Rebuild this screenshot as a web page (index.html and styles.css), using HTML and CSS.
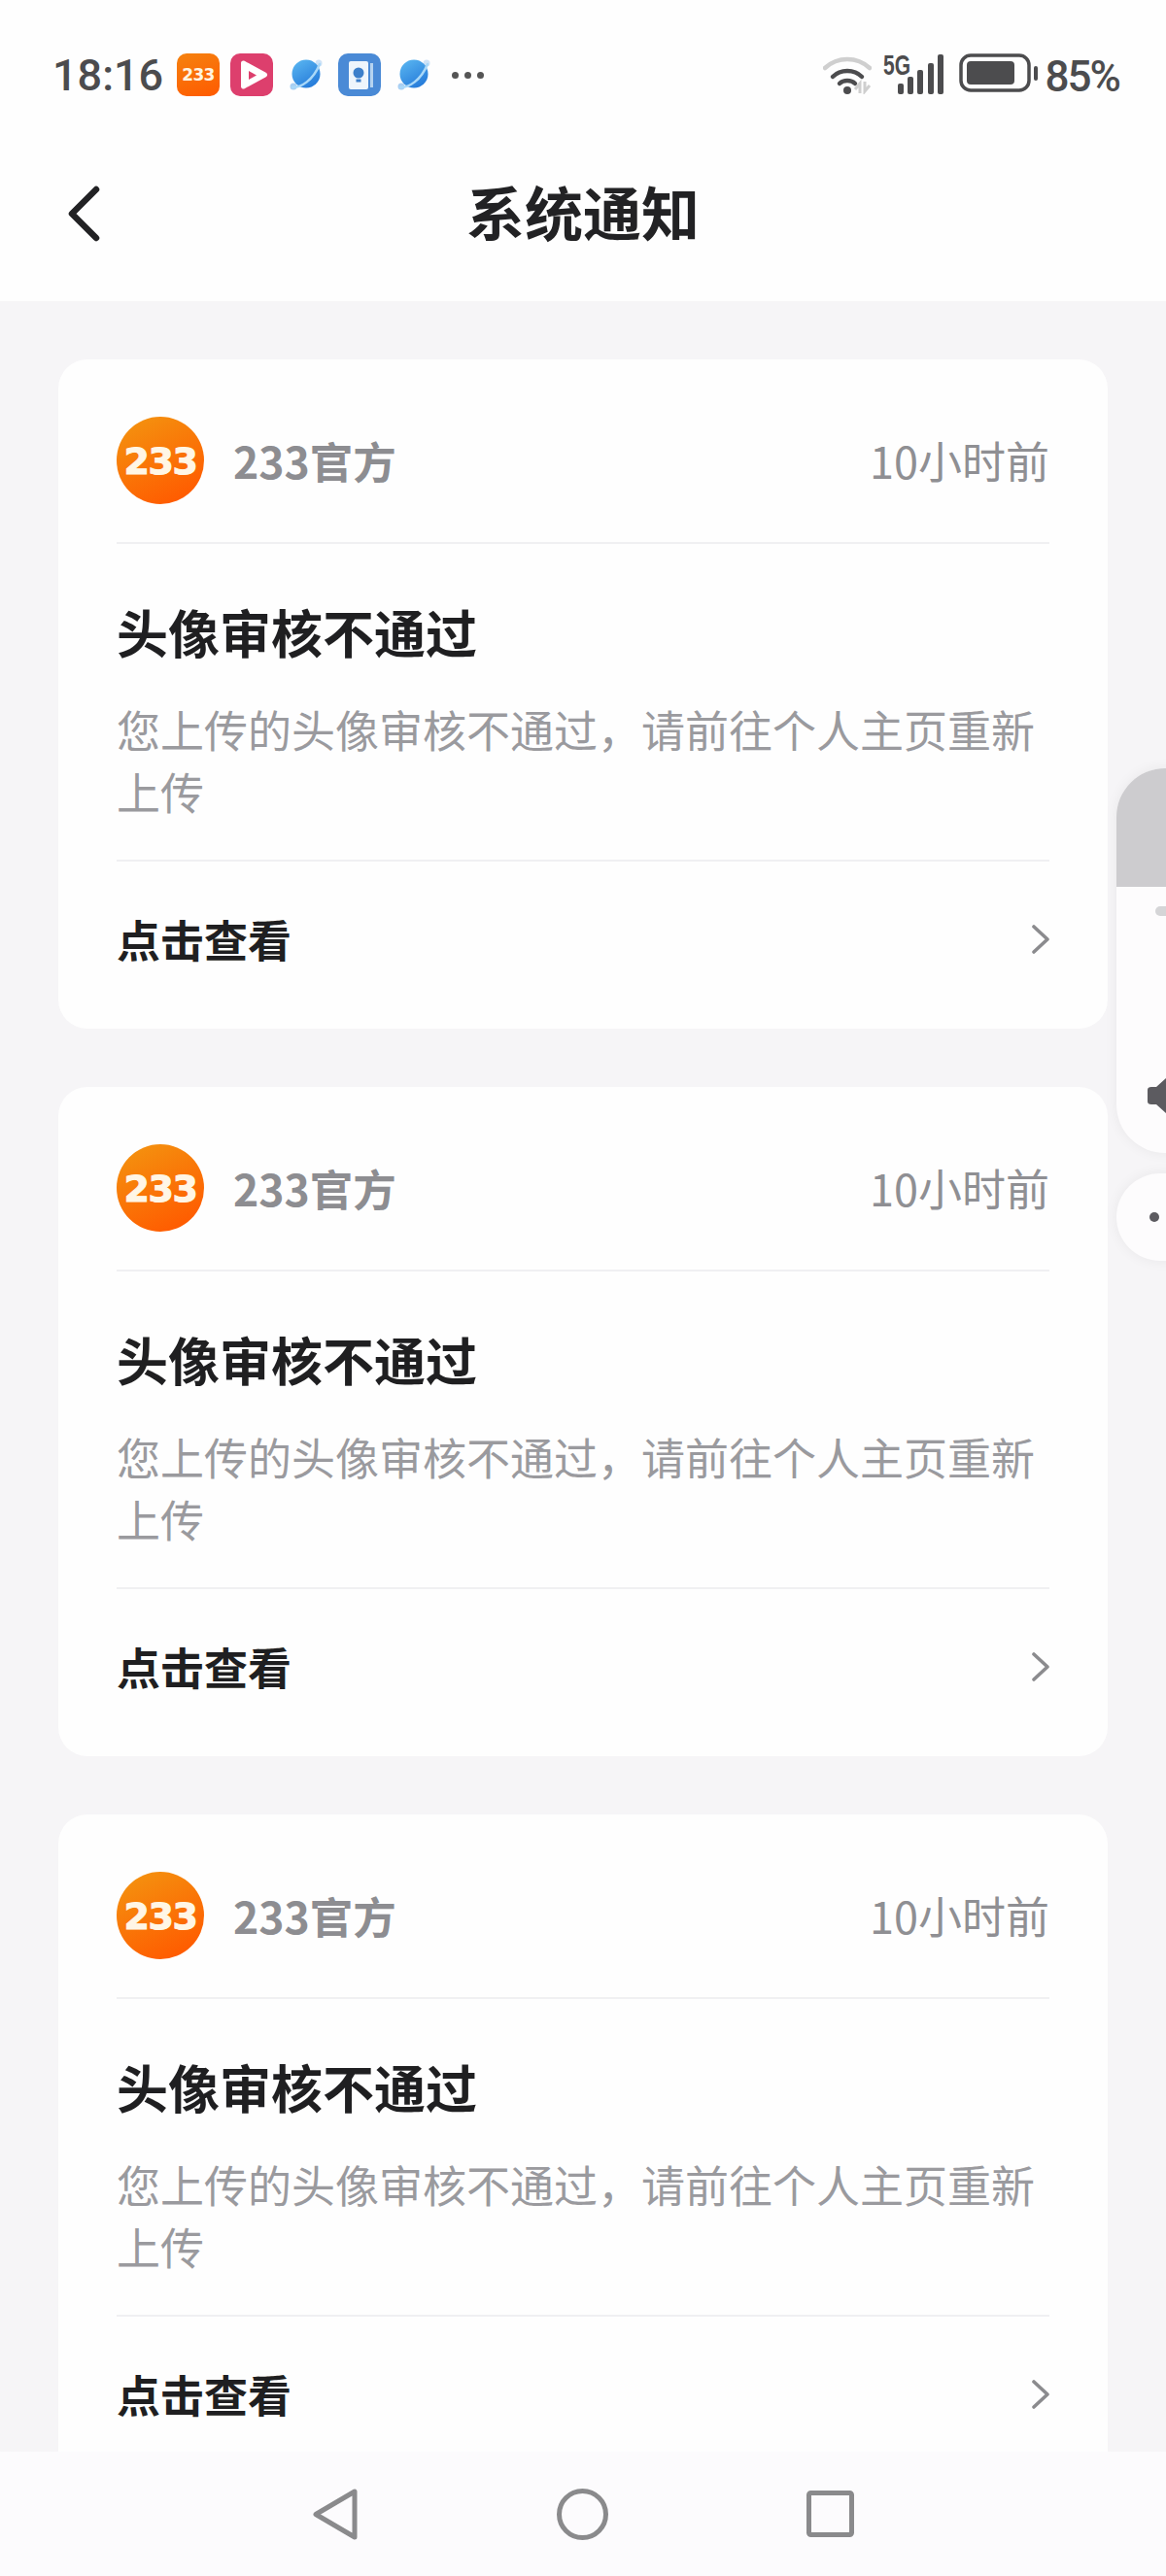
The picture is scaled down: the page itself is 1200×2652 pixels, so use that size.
FILE: index.html
```html
<!DOCTYPE html>
<html lang="zh">
<head>
<meta charset="utf-8">
<title>系统通知</title>
<link rel="stylesheet" href="styles.css">
</head>
<body>
<svg class="defs" width="0" height="0" aria-hidden="true">
  <defs>
    <linearGradient id="orange" x1="0.2" y1="0" x2="0.7" y2="1">
      <stop offset="0" stop-color="#f4920f"/>
      <stop offset="1" stop-color="#ff5a00"/>
    </linearGradient>
    <linearGradient id="planet" x1="0.2" y1="0" x2="0.8" y2="1">
      <stop offset="0" stop-color="#58b4f0"/>
      <stop offset="1" stop-color="#2277d8"/>
    </linearGradient>
    <symbol id="planet-icon" viewBox="0 0 34 32">
      <circle cx="30" cy="4" r="3.500" fill="#cfe3f7"/>
      <circle cx="4" cy="28" r="3.500" fill="#a9cff2"/>
      <circle cx="17" cy="15" r="14.500" fill="url(#planet)"/>
      <path d="M3 29C12 29 24 22 31 5" fill="none" stroke="#a9d8f8" stroke-width="2.500" stroke-linecap="round"/>
    </symbol>
    <symbol id="chev" viewBox="0 0 18 30">
      <path d="M2 2L16 15L2 28" fill="none" stroke="#8b8b8e" stroke-width="3.600" stroke-linecap="round" stroke-linejoin="round"/>
    </symbol>
  </defs>
</svg>
<div class="app">
  <div class="top">
    <div class="status">
      <div class="status-left">
        <span class="time">18:16</span>
        <span class="app-icon app-233">233</span>
        <svg class="app-icon" viewBox="0 0 44 44">
          <rect width="44" height="44" rx="10" fill="#dd3f6d"/>
          <path d="M13.500 10L35.500 22L13.500 34Z" fill="#fff" stroke="#fff" stroke-width="5" stroke-linejoin="round"/>
          <path d="M19 18L27 22.500L19 27Z" fill="#dd3f6d"/>
        </svg>
        <svg class="planet" viewBox="0 0 34 32"><use href="#planet-icon"/></svg>
        <svg class="app-icon" viewBox="0 0 44 44">
          <rect width="44" height="44" rx="10" fill="#4a8ad6"/>
          <rect x="11" y="8" width="20" height="29" rx="2" fill="#eef5fc"/>
          <rect x="33" y="10" width="3" height="25" fill="#b6d3f0"/>
          <circle cx="21" cy="20" r="5.500" fill="#3c7fca"/>
          <rect x="18.500" y="26.500" width="5" height="3" fill="#3c7fca"/>
        </svg>
        <svg class="planet" viewBox="0 0 34 32"><use href="#planet-icon"/></svg>
        <span class="more"><i></i><i></i><i></i></span>
      </div>
      <div class="status-right">
        <svg class="wifi" viewBox="0 0 50 41">
          <path d="M2 14C15 2 35 2 48 14" fill="none" stroke="#cfcfcf" stroke-width="4.500" stroke-linecap="round"/>
          <path d="M10 23C18 15 32 15 40 23" fill="none" stroke="#4c4c4e" stroke-width="4.500" stroke-linecap="round"/>
          <path d="M17 30C21 26 29 26 33 30" fill="none" stroke="#4c4c4e" stroke-width="4.500" stroke-linecap="round"/>
          <circle cx="25" cy="37" r="4" fill="#4c4c4e"/>
          <path d="M38 40V30L33 36M43 28V38L48 32" fill="none" stroke="#cfcfcf" stroke-width="3"/>
        </svg>
        <span class="signal">
          <span class="five-g">5G</span>
          <svg class="bars" viewBox="0 0 47 41">
            <rect x="0" y="30" width="6" height="11" rx="2"/>
            <rect x="10" y="23" width="6" height="18" rx="2"/>
            <rect x="20" y="16" width="6" height="25" rx="2"/>
            <rect x="31" y="9" width="6" height="32" rx="2"/>
            <rect x="41" y="0" width="6" height="41" rx="2"/>
          </svg>
        </span>
        <svg class="battery" viewBox="0 0 81 40">
          <rect x="2" y="2" width="70" height="36" rx="10" fill="none" stroke="#4c4c4e" stroke-width="3.500"/>
          <rect x="8" y="8" width="49" height="24" rx="4" fill="#4c4c4e"/>
          <rect x="77" y="13" width="4" height="15" rx="2" fill="#4c4c4e"/>
        </svg>
        <span class="percent">85%</span>
      </div>
    </div>
    <div class="nav-title">
      <svg class="back" viewBox="0 0 33 58">
        <path d="M29 4L4 29L29 54" fill="none" stroke="#222224" stroke-width="6.500" stroke-linecap="round" stroke-linejoin="round"/>
      </svg>
      <h1>系统通知</h1>
    </div>
  </div>

  <div class="list">
    <section class="card">
      <div class="card-head">
        <svg class="avatar" viewBox="0 0 90 90"><circle cx="45" cy="45" r="45" fill="url(#orange)"/><text x="45" y="59" text-anchor="middle" class="avatar-text">233</text></svg>
        <span class="name">233官方</span>
        <span class="ago">10小时前</span>
      </div>
      <div class="card-body">
        <h2>头像审核不通过</h2>
        <p>您上传的头像审核不通过，请前往个人主页重新上传</p>
      </div>
      <div class="card-foot">
        <span>点击查看</span>
        <svg class="chevron" viewBox="0 0 18 30"><use href="#chev"/></svg>
      </div>
    </section>
    <section class="card">
      <div class="card-head">
        <svg class="avatar" viewBox="0 0 90 90"><circle cx="45" cy="45" r="45" fill="url(#orange)"/><text x="45" y="59" text-anchor="middle" class="avatar-text">233</text></svg>
        <span class="name">233官方</span>
        <span class="ago">10小时前</span>
      </div>
      <div class="card-body">
        <h2>头像审核不通过</h2>
        <p>您上传的头像审核不通过，请前往个人主页重新上传</p>
      </div>
      <div class="card-foot">
        <span>点击查看</span>
        <svg class="chevron" viewBox="0 0 18 30"><use href="#chev"/></svg>
      </div>
    </section>
    <section class="card">
      <div class="card-head">
        <svg class="avatar" viewBox="0 0 90 90"><circle cx="45" cy="45" r="45" fill="url(#orange)"/><text x="45" y="59" text-anchor="middle" class="avatar-text">233</text></svg>
        <span class="name">233官方</span>
        <span class="ago">10小时前</span>
      </div>
      <div class="card-body">
        <h2>头像审核不通过</h2>
        <p>您上传的头像审核不通过，请前往个人主页重新上传</p>
      </div>
      <div class="card-foot">
        <span>点击查看</span>
        <svg class="chevron" viewBox="0 0 18 30"><use href="#chev"/></svg>
      </div>
    </section>
  </div>

  <div class="sysnav">
    <svg class="nav-back" viewBox="0 0 47 53"><path d="M4 26.500L44 3V50Z" fill="none" stroke="#8a8a8c" stroke-width="5" stroke-linejoin="round"/></svg>
    <svg class="nav-home" viewBox="0 0 53 53"><circle cx="26.500" cy="26.500" r="24" fill="none" stroke="#8a8a8c" stroke-width="5"/></svg>
    <svg class="nav-recent" viewBox="0 0 49 48"><rect x="2.500" y="2.500" width="44" height="43" rx="2" fill="none" stroke="#8a8a8c" stroke-width="5"/></svg>
  </div>

  <div class="float-panel">
    <div class="float-fill"></div>
    <div class="float-bar"></div>
    <svg class="float-speaker" viewBox="0 0 19 36"><path d="M0 12Q0 9 4 9H9L19 0V36L9 27H4Q0 27 0 24Z" fill="#5c5b60"/></svg>
  </div>
  <div class="float-pill"><i></i></div>
</div>
</body>
</html>
```

FILE: styles.css
```css
* { box-sizing: border-box; }
html, body { margin: 0; padding: 0; }
body {
  width: 1200px;
  height: 2652px;
  overflow: hidden;
  font-family: "Noto Sans CJK SC", "Noto Sans", sans-serif;
  background: #f6f5f7;
}
.defs { position: absolute; }
.app {
  position: relative;
  width: 1200px;
  height: 2652px;
  display: flex;
  flex-direction: column;
  overflow: hidden;
}
.top {
  height: 310px;
  flex: none;
  background: #fefefe;
  display: flex;
  flex-direction: column;
}
.status {
  height: 110px;
  padding: 55px 48px 0 54px;
  display: flex;
  justify-content: space-between;
  align-items: flex-start;
}
.status-left { display: flex; align-items: center; height: 44px; }
.time {
  font-family: Roboto, sans-serif;
  font-size: 45px;
  font-weight: 500;
  color: #4c4c4e;
  line-height: 44px;
  width: 128px;
  margin-top: 1px;
}
.app-icon { width: 44px; height: 44px; flex: none; margin-right: 11px; }
.app-233 {
  border-radius: 10px;
  background: linear-gradient(160deg, #f5820f, #ff5a00);
  color: #fff4e0;
  font-family: "DejaVu Sans", sans-serif;
  font-weight: 700;
  font-size: 17px;
  letter-spacing: -0.700px;
  line-height: 44px;
  text-align: center;
}
.planet { width: 34px; height: 32px; margin: 0 16px 0 6px; flex: none; }
.more { display: flex; gap: 6px; margin-left: 6px; }
.more i { width: 7px; height: 7px; border-radius: 50%; background: #555; }
.status-right { display: flex; align-items: flex-start; }
.wifi { width: 50px; height: 41px; margin-top: 1px; flex: none; }
.signal { position: relative; width: 62px; height: 41px; margin: 1px 16px 0 12px; flex: none; }
.five-g {
  position: absolute;
  left: 0;
  top: -1px;
  font-family: "Liberation Sans", sans-serif;
  font-weight: 700;
  font-size: 30px;
  line-height: 24px;
  color: #4c4c4e;
  transform: scaleX(0.7);
  transform-origin: left center;
}
.bars { position: absolute; right: 0; top: 0; width: 47px; height: 41px; fill: #4c4c4e; }
.battery { width: 81px; height: 40px; flex: none; }
.percent {
  font-family: Roboto, sans-serif;
  font-size: 44px;
  font-weight: 500;
  letter-spacing: -2px;
  line-height: 44px;
  color: #4c4c4e;
  margin: 2px 0 0 8px;
}
.nav-title {
  position: relative;
  flex: 1;
  display: flex;
  align-items: center;
  justify-content: center;
  padding-top: 14px;
}
.nav-title h1 {
  margin: 0;
  font-size: 60px;
  font-weight: 700;
  line-height: 80px;
  color: #222224;
}
.back { position: absolute; left: 70px; top: 81px; width: 33px; height: 58px; }
.list {
  flex: 1;
  min-height: 0;
  overflow: hidden;
  padding: 60px 60px 0;
  display: flex;
  flex-direction: column;
  gap: 60px;
}
.card {
  flex: none;
  height: 689px;
  background: #fefefe;
  border-radius: 30px;
  padding: 0 60px;
  display: flex;
  flex-direction: column;
}
.card-head {
  height: 190px;
  flex: none;
  padding-top: 20px;
  display: flex;
  align-items: center;
  border-bottom: 2px solid #f0f0f2;
}
.avatar { width: 90px; height: 90px; flex: none; margin-right: 30px; }
.avatar-text {
  font-family: "DejaVu Sans", sans-serif;
  font-weight: 700;
  font-size: 38px;
  letter-spacing: -1.500px;
  fill: #fff6e6;
  stroke: #fff6e6;
  stroke-width: 1;
}
.name { font-size: 44.500px; font-weight: 700; color: #8d8d91; line-height: 60px; }
.ago { margin-left: auto; font-size: 45px; color: #8f8f93; line-height: 60px; }
.card-body {
  height: 327px;
  flex: none;
  padding-top: 55px;
  border-bottom: 2px solid #f0f0f2;
}
.card-body h2 {
  margin: 0;
  font-size: 53px;
  font-weight: 700;
  line-height: 70px;
  color: #1f1f21;
}
.card-body p {
  margin: 34px 0 0;
  font-size: 45px;
  line-height: 64px;
  color: #9a9a9e;
}
.card-foot {
  flex: 1;
  display: flex;
  align-items: center;
  justify-content: space-between;
  padding-bottom: 14px;
  font-size: 45px;
  font-weight: 700;
  color: #1f1f21;
}
.chevron { width: 18px; height: 30px; margin-top: 2px; }
.sysnav {
  height: 128px;
  flex: none;
  background: #fcfbfd;
  display: flex;
  align-items: center;
  padding: 0 321px;
  justify-content: space-between;
}
.nav-back { width: 47px; height: 53px; }
.nav-home { width: 53px; height: 53px; }
.nav-recent { width: 49px; height: 48px; }
.float-panel {
  position: absolute;
  left: 1149px;
  top: 791px;
  width: 100px;
  height: 396px;
  border-radius: 50px;
  background: #fdfcfd;
  overflow: hidden;
  box-shadow: 0 0 14px rgba(0, 0, 0, 0.06);
}
.float-fill { height: 122px; background: #cdcccf; }
.float-bar {
  position: absolute;
  left: 40px;
  top: 142px;
  width: 40px;
  height: 10px;
  border-radius: 5px;
  background: #d5d5d7;
}
.float-speaker { position: absolute; left: 32px; top: 319px; width: 19px; height: 36px; }
.float-pill {
  position: absolute;
  left: 1149px;
  top: 1208px;
  width: 100px;
  height: 90px;
  border-radius: 45px;
  background: #fdfcfd;
  box-shadow: 0 0 14px rgba(0, 0, 0, 0.06);
}
.float-pill i {
  position: absolute;
  left: 34px;
  top: 40px;
  width: 10px;
  height: 10px;
  border-radius: 50%;
  background: #5c5b60;
}
```
